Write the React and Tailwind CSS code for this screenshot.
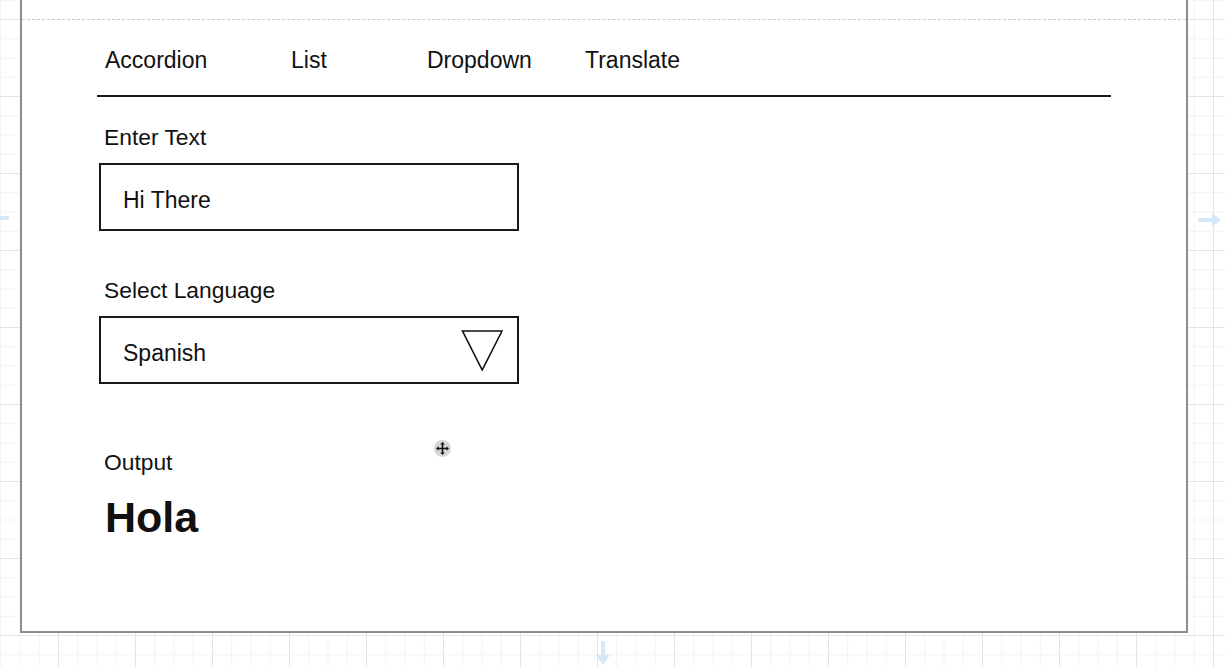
import { useState } from 'react';

const TABS = [
  { label: 'Accordion', width: 'w-[186px]' },
  { label: 'List', width: 'w-[136px]' },
  { label: 'Dropdown', width: 'w-[158px]' },
  { label: 'Translate', width: '' },
];

function MoveCursor() {
  return (
    <svg className="absolute left-[433px] top-[439px]" width="19" height="19" viewBox="0 0 19 19">
      <circle cx="9.5" cy="9.5" r="8.5" fill="#8a8a8a" opacity="0.35" />
      <path d="M9.5 3 L7.2 5.6 H8.7 V8.7 H5.6 V7.2 L3 9.5 L5.6 11.8 V10.3 H8.7 V13.4 H7.2 L9.5 16 L11.8 13.4 H10.3 V10.3 H13.4 V11.8 L16 9.5 L13.4 7.2 V8.7 H10.3 V5.6 H11.8 Z" fill="#111" />
    </svg>
  );
}

function HoverArrows() {
  return (
    <>
      <svg className="absolute left-0 top-[212px]" width="10" height="12" viewBox="0 0 10 12">
        <rect x="0" y="4" width="9" height="4" fill="#d6e8f7" />
      </svg>
      <svg className="absolute left-[1197px] top-[210px]" width="26" height="20" viewBox="0 0 26 20">
        <path d="M1 8 H15 V3 L24 10 L15 17 V12 H1 Z" fill="#d6e8f7" />
      </svg>
      <svg className="absolute left-[593px] top-[640px]" width="20" height="27" viewBox="0 0 20 27">
        <path d="M8 1 H12 V15 H17 L10 25 L3 15 H8 Z" fill="#d6e8f7" />
      </svg>
    </>
  );
}

export default function App() {
  const [text, setText] = useState('Hi There');
  const [active, setActive] = useState('Translate');

  return (
    <div
      className="relative h-[667px] w-[1225px] overflow-hidden bg-white bg-[linear-gradient(to_right,#e3e3e3_1px,transparent_1px),linear-gradient(to_bottom,#e3e3e3_1px,transparent_1px),linear-gradient(to_right,#f2f2f2_1px,transparent_1px),linear-gradient(to_bottom,#f2f2f2_1px,transparent_1px)] bg-[size:77px_77px,77px_77px,19.25px_19.25px,19.25px_19.25px] bg-[position:58px_19px] text-[#111]"
      style={{ fontFamily: '"Liberation Sans", Arial, Helvetica, sans-serif' }}
    >
      {/* frame */}
      <div className="ml-[20px] h-[633px] w-[1168px] border-x-2 border-b-2 border-[#8c8c8c] bg-white pt-[19px]">
        <div className="border-t border-dashed border-[#c9c9c9]" />

        <div className="ml-[75px]">
          {/* tabs */}
          <div className="mt-[27px] flex pl-[8px] text-[23px] leading-[26px]">
            {TABS.map(t => (
              <button
                key={t.label}
                type="button"
                onClick={() => setActive(t.label)}
                className={`${t.width} text-left ${active === t.label ? 'text-[#111]' : 'text-[#111]'}`}
              >
                {t.label}
              </button>
            ))}
          </div>
          <div className="mt-[22px] h-[2px] w-[1014px] bg-[#1a1a1a]" />

          <div className="ml-[7px] mt-[27px] text-[22.8px] leading-[26px]">Enter Text</div>
          <div className="ml-[2px] mt-[13px] flex h-[68px] w-[420px] items-center border-2 border-[#1a1a1a] pl-[22px] pt-[6px]">
            <input
              value={text}
              onChange={e => setText(e.target.value)}
              className="w-full bg-transparent text-[23px] leading-[26px] outline-none"
            />
          </div>

          <div className="ml-[7px] mt-[46px] text-[22.8px] leading-[26px]">Select Language</div>
          <div className="ml-[2px] mt-[13px] flex h-[68px] w-[420px] items-center justify-between border-2 border-[#1a1a1a] pl-[22px] pr-[14px]">
            <span className="pt-[6px] text-[23px] leading-[26px]">Spanish</span>
            <svg width="42" height="42" viewBox="0 0 42 42">
              <polygon points="1.5,2 41,2 21.2,41" fill="none" stroke="#111" strokeWidth="1.6" strokeLinejoin="miter" />
            </svg>
          </div>

          <div className="ml-[7px] mt-[65px] text-[22.8px] leading-[26px]">Output</div>
          <div className="ml-[8px] mt-[17px] text-[43px] font-bold leading-[50px]">Hola</div>
        </div>
      </div>

      <MoveCursor />
      <HoverArrows />
    </div>
  );
}
